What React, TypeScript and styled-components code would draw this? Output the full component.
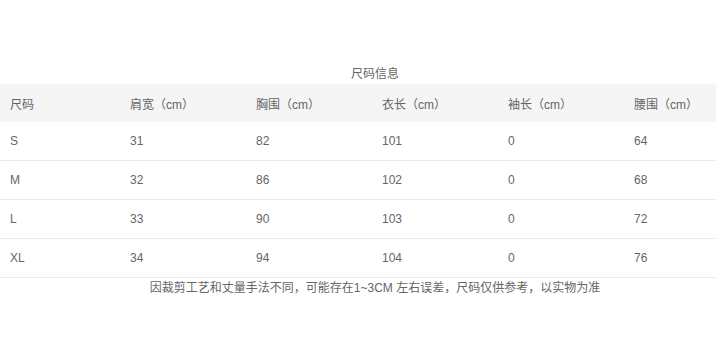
import React from "react";
import styled, { createGlobalStyle } from "styled-components";

const GlobalStyle = createGlobalStyle`
  html, body {
    margin: 0;
    padding: 0;
    background: #fff;
    overflow: hidden;
  }
  body {
    font-family: "Liberation Sans", "Noto Sans CJK SC", Arial, sans-serif;
    font-size: 12px;
    color: #666;
  }
`;

const SizeWrapper = styled.div`
  width: 750px;
  padding-top: 64px;
`;

const Caption = styled.div`
  height: 20px;
  line-height: 20px;
  text-align: center;
  color: #666;
`;

const TableRow = styled.div<{ head?: boolean }>`
  display: grid;
  grid-template-columns: 120px repeat(5, 126px);
  height: ${(p) => (p.head ? "38px" : "38px")};
  background-color: ${(p) => (p.head ? "#f5f5f5" : "#fff")};
  border-bottom: ${(p) => (p.head ? "none" : "1px solid #ebebeb")};
`;

const Cell = styled.div`
  display: flex;
  align-items: center;
  padding-left: 10px;
  color: #666;
  white-space: nowrap;
`;

const Note = styled.p`
  margin: 0;
  height: 20px;
  line-height: 20px;
  text-align: center;
  color: #666;
`;

const HEADERS = [
  "尺码",
  "肩宽（cm）",
  "胸围（cm）",
  "衣长（cm）",
  "袖长（cm）",
  "腰围（cm）",
];

const ROWS = [
  ["S", "31", "82", "101", "0", "64"],
  ["M", "32", "86", "102", "0", "68"],
  ["L", "33", "90", "103", "0", "72"],
  ["XL", "34", "94", "104", "0", "76"],
];

export default function App() {
  return (
    <>
      <GlobalStyle />
      <SizeWrapper>
        <Caption>尺码信息</Caption>
        <TableRow head>
          {HEADERS.map((h, index) => (
            <Cell key={index}>{h}</Cell>
          ))}
        </TableRow>
        {ROWS.map((row, index) => (
          <TableRow key={index}>
            {row.map((value, i) => (
              <Cell key={i}>{value}</Cell>
            ))}
          </TableRow>
        ))}
        <Note>因裁剪工艺和丈量手法不同，可能存在1~3CM 左右误差，尺码仅供参考，以实物为准</Note>
      </SizeWrapper>
    </>
  );
}
